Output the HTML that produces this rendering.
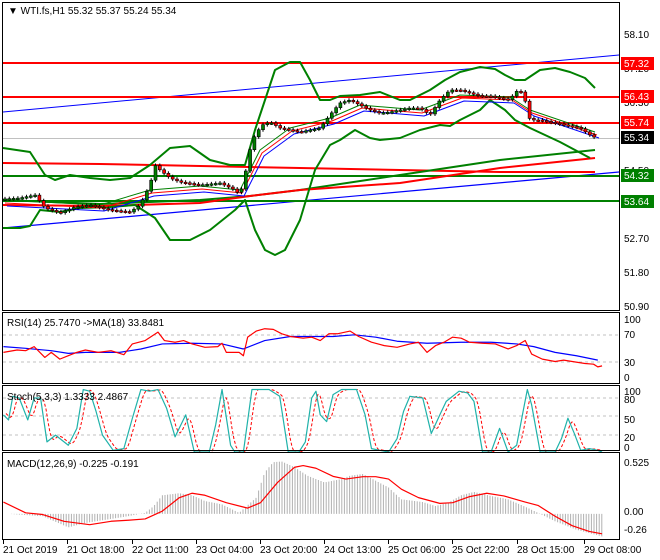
<!DOCTYPE html>
<html><head><meta charset="utf-8"><style>
html,body{margin:0;padding:0;background:#fff;}
body{width:660px;height:560px;overflow:hidden;position:relative;font-family:"Liberation Sans",sans-serif;}
svg{position:absolute;left:0;top:0;}
text{font-family:"Liberation Sans",sans-serif;font-size:10px;fill:#000;}
</style></head><body>
<svg id="s" width="660" height="560" xmlns="http://www.w3.org/2000/svg">
<rect width="660" height="560" fill="#fff"/>
<g id="g"></g>
<!-- pane borders -->
<g fill="none" stroke="#000" stroke-width="1">
<rect x="2.5" y="2.5" width="617" height="308"/>
<rect x="2.5" y="312.5" width="617" height="71"/>
<rect x="2.5" y="385.5" width="617" height="65"/>
<rect x="2.5" y="452.5" width="617" height="87"/>
</g>
<text x="8" y="14">▼ WTI.fs,H1  55.32 55.37 55.24 55.34</text>
<text x="7" y="326">RSI(14) 25.7470  -&gt;MA(18) 33.8481</text>
<text x="7" y="400">Stoch(5,3,3) 1.3333 2.4867</text>
<text x="7" y="467">MACD(12,26,9) -0.225 -0.191</text>
<g>
<text x="624" y="38">58.10</text>
<text x="624" y="72">57.20</text>
<text x="624" y="106">56.30</text>
<text x="624" y="174">54.50</text>
<text x="624" y="208">53.60</text>
<text x="624" y="242">52.70</text>
<text x="624" y="276">51.80</text>
<text x="624" y="310">50.90</text>
</g>
<rect x="621" y="57" width="33" height="13" fill="#ff0000"/><text x="624" y="67" style="fill:#fff">57.32</text>
<rect x="621" y="90" width="33" height="13" fill="#ff0000"/><text x="624" y="100" style="fill:#fff">56.43</text>
<rect x="621" y="116" width="33" height="13" fill="#ff0000"/><text x="624" y="126" style="fill:#fff">55.74</text>
<rect x="621" y="131" width="33" height="13" fill="#000"/><text x="624" y="141" style="fill:#fff">55.34</text>
<rect x="621" y="169" width="33" height="13" fill="#008000"/><text x="624" y="179" style="fill:#fff">54.32</text>
<rect x="621" y="195" width="33" height="13" fill="#008000"/><text x="624" y="205" style="fill:#fff">53.64</text>
<text x="624" y="323">100</text><text x="624" y="338">70</text><text x="624" y="366">30</text><text x="624" y="381">0</text>
<text x="624" y="395">100</text><text x="624" y="403">80</text><text x="624" y="423">50</text><text x="624" y="441">20</text><text x="624" y="451">0</text>
<text x="624" y="466">0.525</text><text x="624" y="515">0.00</text><text x="624" y="533">-0.26</text>
<g>
<text x="3" y="553">21 Oct 2019</text>
<text x="67" y="553">21 Oct 18:00</text>
<text x="132" y="553">22 Oct 11:00</text>
<text x="196" y="553">23 Oct 04:00</text>
<text x="260" y="553">23 Oct 20:00</text>
<text x="324" y="553">24 Oct 13:00</text>
<text x="388" y="553">25 Oct 06:00</text>
<text x="452" y="553">25 Oct 22:00</text>
<text x="517" y="553">28 Oct 15:00</text>
<text x="584" y="553">29 Oct 08:00</text>
</g>
</svg>
<script>
var g=document.getElementById('g');var NS='http://www.w3.org/2000/svg';
function el(t,a){var e=document.createElementNS(NS,t);for(var k in a)e.setAttribute(k,a[k]);g.appendChild(e);return e;}
function pl(p,c,w,d){el('polyline',{points:p.map(function(q){return q[0]+','+q[1]}).join(' '),fill:'none',stroke:c,'stroke-width':w||1,'stroke-dasharray':d||'','stroke-linejoin':'round'});}
function P(a){var r=[];for(var i=0;i<a.length;i+=2)r.push([a[i],a[i+1]]);return r;}
function Z(a){var r=[];for(var i=0;i<a.length;i+=2)r.push([a[i]*0.427,300+a[i+1]/2.96]);return r;}
function interp(p,x){for(var i=1;i<p.length;i++){if(x<=p[i][0]){var a=p[i-1],b=p[i];var t=(x-a[0])/(b[0]-a[0]||1);return a[1]+t*(b[1]-a[1]);}}return p[p.length-1][1];}
// main pane
el('line',{x1:3,y1:138.5,x2:619,y2:138.5,stroke:'#c0c0c0'});
pl([[3,112],[619,55]],'#0000ff',1);
pl([[3,228],[619,172]],'#0000ff',1.2);
pl([[3,163],[100,164],[200,166],[300,168],[400,170],[500,172],[595,172]],'#ff0000',2);
pl([[3,63],[619,63]],'#ff0000',2);pl([[3,97],[619,97]],'#ff0000',2);pl([[3,123],[619,123]],'#ff0000',2);
pl([[3,176],[619,176]],'#008000',2);pl([[3,201],[619,201]],'#008000',2);
pl(P([3,200,100,204,200,200,250,196,300,190,400,175,500,160,595,150]),'#008000',2);
pl(P([3,205,100,206,200,203,250,196,300,190,400,183,500,168,595,158]),'#ff0000',2);
pl(P([3,148,30,152,45,175,55,180,70,175,90,178,110,180,130,178,150,165,170,148,190,146,210,160,230,165,245,165,255,130,265,100,275,70,290,62,300,62,310,80,320,100,330,100,340,96,360,95,380,92,400,100,410,100,430,90,445,80,460,72,480,67,495,69,505,75,515,80,525,80,540,70,555,68,570,72,585,78,595,88]),'#008000',2);
pl(P([3,228,20,228,30,226,40,210,60,212,80,208,110,207,135,205,155,218,170,240,190,240,210,230,235,210,245,200,255,230,265,250,275,255,285,250,300,220,315,170,330,145,340,140,355,130,370,138,380,140,400,138,420,130,440,125,450,126,460,120,480,110,490,100,505,110,515,120,530,128,545,135,560,142,575,150,590,158]),'#008000',2);
var price=P([3,199,20,198,35,195,45,208,60,213,75,207,90,205,110,210,130,212,140,205,150,185,155,165,160,170,170,178,180,182,200,185,220,183,235,190,240,195,245,175,250,150,255,135,262,125,270,122,280,128,290,130,300,132,310,130,320,128,330,115,340,103,350,100,360,105,370,110,380,113,390,112,400,110,410,108,420,108,430,115,440,100,450,90,460,90,470,93,480,96,490,96,500,98,510,100,515,92,520,90,525,100,530,120,540,120,550,122,560,124,570,126,580,128,590,135,596,138]);
var mid=P([3,200,100,205,150,190,200,186,240,190,260,150,290,128,330,118,360,105,420,110,460,95,510,97,530,110,595,132]);
pl(mid,'#008000',1);pl(mid.map(function(q){return [q[0]+2,q[1]+3]}),'#ff0000',1);pl(mid.map(function(q){return [q[0]+4,q[1]+6]}),'#0000ff',1);
var prev=interp(price,3);
for(var x=5;x<=596;x+=4.3){var c=interp(price,x);var o=prev;var t=Math.min(o,c)-2,b=Math.max(o,c)+2;
el('line',{x1:x,y1:t,x2:x,y2:b,stroke:'#000'});
var h=Math.max(Math.abs(c-o),1.5);el('rect',{x:x-1.5,y:Math.min(o,c),width:3,height:h,fill:c<o?'#008000':'#ff0000',stroke:'#000','stroke-width':0.6});prev=c;}
// RSI
pl([[3,335],[619,335]],'#c0c0c0',1,'3,3');pl([[3,362],[619,362]],'#c0c0c0',1,'3,3');
pl(Z([8,138,60,143,120,150,160,158,200,155,280,155,330,145,380,130,450,128,520,130,570,145,620,120,680,108,730,108,780,108,830,103,880,110,930,122,1000,128,1080,125,1150,125,1210,130,1250,138,1300,155,1350,165,1400,178]),'#0000ff',1.2);
pl(Z([8,155,40,148,60,150,80,138,105,170,120,155,140,175,160,165,180,155,200,148,230,155,260,150,290,162,310,130,340,120,370,95,385,120,410,125,430,120,450,130,480,140,510,138,520,128,530,155,560,155,570,165,580,110,600,92,620,85,640,87,660,100,680,108,710,113,730,110,750,120,770,100,790,100,820,92,840,108,870,125,900,135,930,140,960,130,980,125,1000,155,1020,135,1040,125,1060,110,1080,113,1100,125,1130,128,1160,130,1190,145,1210,135,1230,120,1245,160,1270,175,1300,182,1320,178,1340,182,1370,188,1390,190,1400,198,1410,195]),'#ff0000',1.2);
// Stoch
[398,416,435].forEach(function(y){pl([[3,y],[619,y]],'#c0c0c0',1,'3,3');});
var st=Z([8,340,20,355,30,285,45,290,65,355,80,290,95,290,110,420,130,400,160,430,180,380,195,265,210,270,225,330,240,400,265,445,290,440,310,350,330,265,350,270,370,265,390,320,410,405,435,340,455,450,490,450,505,370,520,265,540,430,550,450,570,450,590,265,630,265,655,285,675,450,700,450,715,420,730,290,740,270,750,340,765,360,780,280,800,265,835,265,855,340,870,440,910,450,930,410,945,330,960,285,990,290,1010,395,1030,340,1045,300,1075,270,1095,275,1110,300,1130,450,1150,450,1170,380,1190,450,1210,430,1225,330,1235,265,1245,310,1265,450,1300,450,1315,410,1330,350,1345,395,1360,445,1380,440,1400,445,1410,450]);
var sg=[];for(var x=6;x<=602;x+=2){var v=(interp(st,x-2)+interp(st,x-4)+interp(st,x-6))/3;sg.push([x,v]);}
pl(sg,'#ff0000',1,'3,2');pl(st,'#20b2aa',1.2);
// MACD
var hist=Z([20,633,100,640,160,673,200,660,240,652,300,640,340,630,360,610,380,578,420,572,450,578,480,595,520,605,560,630,600,585,620,510,640,480,660,478,690,495,720,520,760,540,800,530,820,520,850,515,880,535,910,555,940,590,990,598,1020,610,1050,600,1080,578,1110,568,1150,580,1190,590,1230,612,1260,630,1300,655,1350,680,1410,700]);
var z=300+633/2.96;
for(var x=9;x<=603;x+=2.6){var y=interp(hist,x);el('line',{x1:x,y1:z,x2:x,y2:y,stroke:'#b0b0b0'});}
pl(Z([8,598,60,630,100,635,150,655,210,665,260,655,300,652,340,648,380,625,420,585,450,572,480,578,530,600,580,616,610,600,650,540,690,495,710,490,740,498,780,522,810,530,850,523,880,523,910,530,940,560,980,585,1030,602,1060,600,1100,582,1140,572,1180,580,1230,598,1260,608,1300,640,1340,668,1380,685,1410,692]),'#ff0000',1.2);
// ticks
[3,67,132,196,260,324,388,452,517,584].forEach(function(x){el('line',{x1:x+.5,y1:540,x2:x+.5,y2:544,stroke:'#000'});});
</script>
</body></html>
